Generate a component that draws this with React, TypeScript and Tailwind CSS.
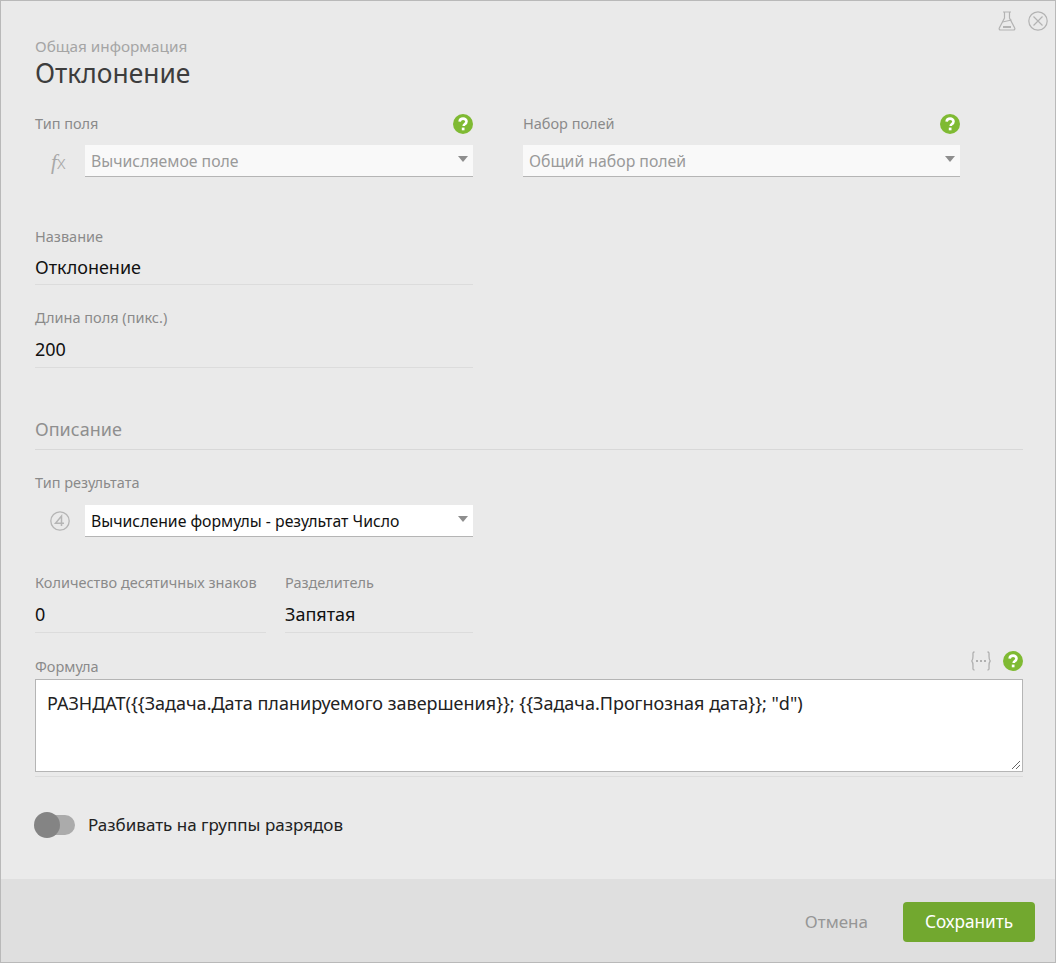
import React from "react";

const font = { fontFamily: '"Noto Sans", sans-serif' };

function Help() {
  return (
    <svg width="20" height="20" viewBox="0 0 20 20" className="block shrink-0">
      <circle cx="10" cy="10" r="10" fill="#7fba33" />
      <path d="M6.6 7.6C6.8 5.7 8.2 4.6 10.1 4.6c2 0 3.4 1.2 3.4 2.9 0 1.400-.8 2.100-1.800 2.800-.7.5-1 .9-1 1.700" fill="none" stroke="#fff" strokeWidth="2.6" />
      <rect x="8.800" y="13.600" width="2.700" height="2.700" fill="#fff" />
    </svg>
  );
}

function Arrow() {
  return (
    <svg width="10" height="6" viewBox="0 0 10 6" className="block">
      <path d="M0 0h10L5 6z" fill="#8e8e8e" />
    </svg>
  );
}

function Label({ children }: { children: React.ReactNode }) {
  return <div className="h-[20px] text-[14.5px] leading-[18px] text-[#8a8a8a] whitespace-nowrap">{children}</div>;
}

function SelectBox({ text, disabled }: { text: string; disabled?: boolean }) {
  return (
    <div className={`h-[32px] flex items-center justify-between pl-[6px] pr-[5px] border-b border-[#b5b5b5] ${disabled ? "bg-[#f9f9f9] text-[#9a9a9a]" : "bg-white text-[#111]"}`}>
      <span className="pt-[2px] text-[15.8px] whitespace-nowrap">{text}</span>
      <span className="mb-[3px]"><Arrow /></span>
    </div>
  );
}

function TextField({ label, value, className, tall }: { label: string; value: string; className: string; tall?: boolean }) {
  return (
    <div className={className}>
      <Label>{label}</Label>
      <div className={`${tall ? "h-[40px] pt-[10px]" : "h-[38px] pt-[9px]"} text-[18px] leading-[22px] text-[#111] border-b border-[#dcdcdc] whitespace-nowrap`}>{value}</div>
    </div>
  );
}

export default function App() {
  return (
    <div style={font} className="relative w-[1056px] h-[963px] flex flex-col bg-[#eaeaea] border border-[#b9b9b9]">
      <div className="absolute top-[10px] right-[7px] flex items-center gap-[12px]">
        <svg width="18" height="20" viewBox="0 0 18 20" fill="none" stroke="#b3b3b3" strokeWidth="1.2">
          <path d="M5 1h8M6.5 1v6L1.3 17c-.5 1 .1 2 1.2 2h13c1.100 0 1.700-1 1.200-2L11.500 7V1" />
          <path d="M4.500 11l9 -2" strokeWidth="1" />
          <path d="M5 16h8" strokeWidth="2" />
        </svg>
        <svg width="20" height="20" viewBox="0 0 20 20" fill="none" stroke="#b3b3b3" strokeWidth="1.2">
          <circle cx="10" cy="10" r="9.200" />
          <path d="M5.500 5.500l9 9M14.500 5.500l-9 9" />
        </svg>
      </div>

      <main className="flex-1 pl-[34px] pr-[32px] pt-[36px]">
        <div className="h-[20px] text-[15.3px] leading-[18px] text-[#a5a5a5]">Общая информация</div>
        <h1 className="text-[26.4px] leading-[32px] text-[#3d3d3d]">Отклонение</h1>

        <div className="flex mt-[23px]">
          <div className="w-[438px]">
            <div className="flex justify-between items-center h-[24px]"><Label>Тип поля</Label><Help /></div>
            <div className="flex items-center mt-[9px]">
              <div className="w-[50px] pl-[16px] text-[#a8a8a8] text-[21px] leading-[24px] whitespace-nowrap">
                <i style={{ fontFamily: '"Liberation Serif", serif' }}>f</i>
                <span className="text-[18px] font-light">x</span>
              </div>
              <div className="flex-1"><SelectBox text="Вычисляемое поле" disabled /></div>
            </div>
          </div>
          <div className="w-[437px] ml-[50px]">
            <div className="flex justify-between items-center h-[24px]"><Label>Набор полей</Label><Help /></div>
            <div className="mt-[9px]"><SelectBox text="Общий набор полей" disabled /></div>
          </div>
        </div>

        <TextField className="w-[438px] mt-[50px]" label="Название" value="Отклонение" />
        <TextField className="w-[438px] mt-[23px]" label="Длина поля (пикс.)" value="200" tall />

        <div className="mt-[49px] pb-[8px] border-b border-[#d8d8d8] text-[18px] leading-[24px] text-[#8f8f8f]">Описание</div>

        <div className="w-[438px] mt-[23px]">
          <Label>Тип результата</Label>
          <div className="flex items-center mt-[12px]">
            <div className="w-[50px] pl-[15px]">
              <svg width="20" height="20" viewBox="0 0 20 20" className="block">
                <circle cx="10" cy="10" r="9.200" fill="none" stroke="#b5b5b5" strokeWidth="1.300" />
                <path d="M11.500 15V5L5.500 12.300h8.500" fill="none" stroke="#b5b5b5" strokeWidth="1.500" />
              </svg>
            </div>
            <div className="flex-1"><SelectBox text="Вычисление формулы - результат Число" /></div>
          </div>
        </div>

        <div className="flex w-[438px] mt-[36px] gap-[19px]">
          <TextField className="w-[231px]" label="Количество десятичных знаков" value="0" tall />
          <TextField className="w-[188px]" label="Разделитель" value="Запятая" tall />
        </div>

        <div className="mt-[16px] flex justify-between items-start h-[24px]">
          <div className="mt-[8px]"><Label>Формула</Label></div>
          <div className="flex items-center gap-[12px] mt-[2px]">
            <svg width="20" height="20" viewBox="0 0 20 20" fill="none" stroke="#b0b0b0" strokeWidth="1.300">
              <path d="M3.500 1C1.500 1 2 2.500 2 5c0 3-.2 4-1.200 5 1 1 1.200 2 1.200 5 0 2.500-.5 4 1.500 4M16.500 1c2 0 1.500 1.500 1.500 4 0 3 .2 4 1.200 5-1 1-1.200 2-1.200 5 0 2.500.5 4-1.500 4" />
              <path d="M5 10h2M9 10h2M13 10h2" strokeWidth="2" />
            </svg>
            <Help />
          </div>
        </div>
        <div className="mt-[6px] pb-[4px] border-b border-[#dcdcdc]">
          <div className="relative h-[93px] bg-white border border-[#b5b5b5] pl-[11px] pt-[10px] text-[18px] leading-[26px] text-[#222] whitespace-nowrap">
            РАЗНДАТ({"{{"}Задача.Дата планируемого завершения{"}}"}; {"{{"}Задача.Прогнозная дата{"}}"}; "d")
            <svg width="10" height="10" viewBox="0 0 10 10" className="absolute right-[1px] bottom-[1px]" stroke="#666" strokeWidth="1">
              <path d="M1 9l8-8M5 9l4-4" />
            </svg>
          </div>
        </div>

        <div className="flex items-center mt-[34px] h-[28px]">
          <div className="relative w-[40px] h-[20px] rounded-full bg-[#ababab]">
            <div className="absolute -left-[1px] -top-[3px] w-[26px] h-[26px] rounded-full bg-[#848484]" />
          </div>
          <span className="ml-[13px] text-[17px] text-[#222] whitespace-nowrap">Разбивать на группы разрядов</span>
        </div>
      </main>

      <footer className="h-[83px] bg-[#dfdfdf] flex items-center justify-end pr-[20px] pt-[2px]">
        <button className="text-[17px] text-[#969696] mr-[35px]">Отмена</button>
        <button className="w-[132px] h-[40px] rounded-[4px] bg-[#72a82f] text-white text-[17.2px]">Сохранить</button>
      </footer>
    </div>
  );
}
